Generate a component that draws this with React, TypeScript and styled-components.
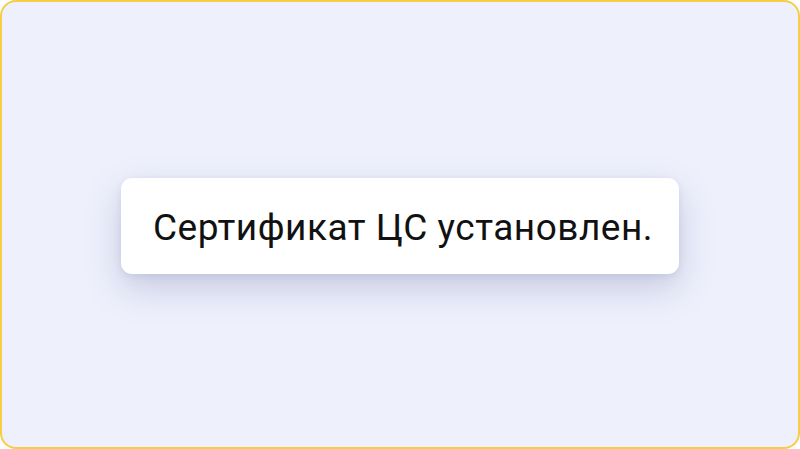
import { FunctionComponent } from "react";
import styled, { createGlobalStyle } from "styled-components";

const GlobalStyle = createGlobalStyle`
  html, body {
    margin: 0;
    padding: 0;
    background: #ffffff;
  }
  * {
    box-sizing: border-box;
  }
`;

const Frame = styled.div`
  width: 800px;
  height: 449px;
  border: 2px solid #f6cd45;
  border-radius: 16px;
  background: #eef0fc;
  display: flex;
  align-items: center;
  justify-content: center;
  overflow: hidden;
`;

const Toast = styled.div`
  width: 558px;
  height: 96px;
  margin-top: 2px;
  background: #ffffff;
  border-radius: 11px;
  box-shadow: 0 14px 34px rgba(95, 105, 150, 0.28),
    0 2px 6px rgba(95, 105, 150, 0.12);
  display: flex;
  align-items: center;
  padding: 4px 0 0 32px;
`;

const Message = styled.p`
  margin: 0;
  font-family: Roboto, "Noto Sans", sans-serif;
  font-size: 37px;
  line-height: 40px;
  letter-spacing: 0.5px;
  white-space: nowrap;
  color: #111111;
`;

const App: FunctionComponent = () => {
  return (
    <>
      <GlobalStyle />
      <Frame>
        <Toast>
          <Message>Сертификат ЦС установлен.</Message>
        </Toast>
      </Frame>
    </>
  );
};

export default App;
